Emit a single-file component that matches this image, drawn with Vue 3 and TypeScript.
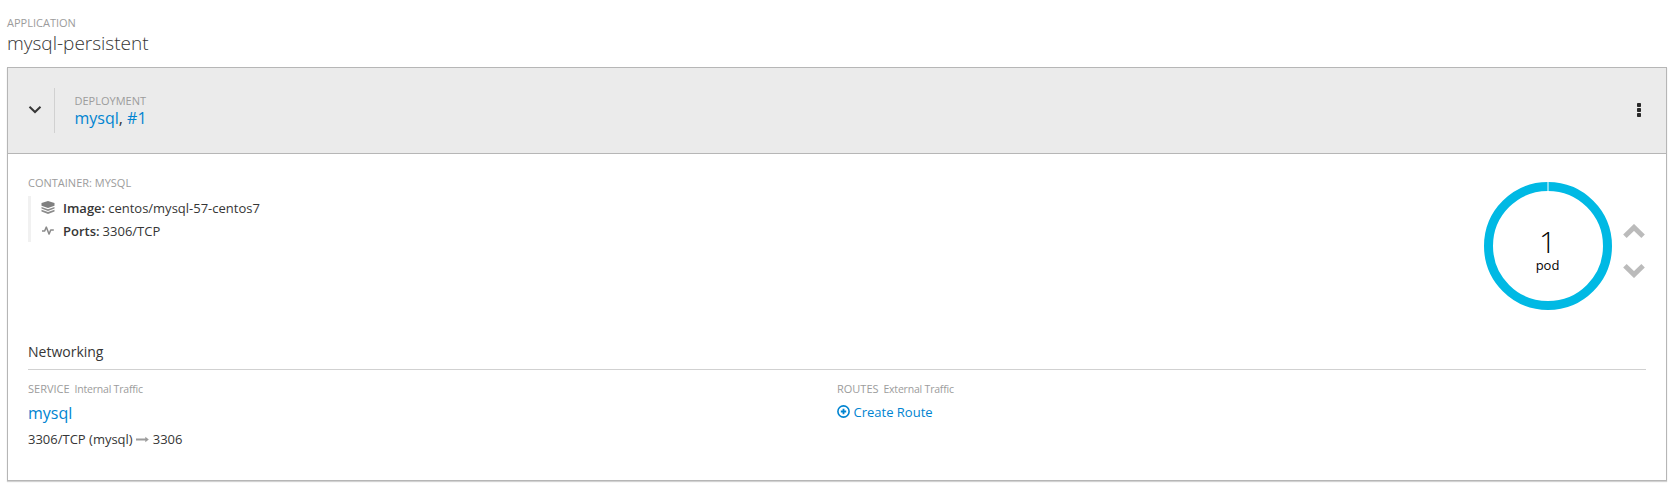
<script setup lang="ts">
interface Detail {
  icon: 'layers' | 'pulse'
  label: string
  value: string
}

const details: Detail[] = [
  { icon: 'layers', label: 'Image:', value: 'centos/mysql-57-centos7' },
  { icon: 'pulse', label: 'Ports:', value: '3306/TCP' },
]
</script>

<template>
  <main class="app">
    <div class="label">APPLICATION</div>
    <h2 class="app-name">mysql-persistent</h2>

    <section class="card">
      <header class="card-header">
        <div class="toggle">
          <svg width="14" height="10" viewBox="0 0 14 10"><path d="M1.5 1.8 7 7 12.5 1.8" fill="none" stroke="#363636" stroke-width="2" /></svg>
        </div>
        <div class="deployment">
          <div class="label">DEPLOYMENT</div>
          <div class="deployment-name"><a>mysql</a>, <a>#1</a></div>
        </div>
        <svg class="kebab" width="4" height="14" viewBox="0 0 4 14" fill="#292929">
          <rect width="4" height="4" rx=".8" /><rect y="5" width="4" height="4" rx=".8" /><rect y="10" width="4" height="4" rx=".8" />
        </svg>
      </header>

      <div class="card-body">
        <div class="overview">
          <div class="container-info">
            <div class="label">CONTAINER: MYSQL</div>
            <ul class="details">
              <li v-for="d in details" :key="d.label">
                <svg v-if="d.icon === 'layers'" width="14" height="14" viewBox="0 0 14 14">
                  <path d="M7 0 13.5 2V4.7L7 7 .5 4.7V2Z" fill="#808080" />
                  <path d="M.5 5.9 7 8.2 13.5 5.9V7.6L7 9.9.5 7.6ZM.5 8.8 7 11.1 13.5 8.8V10.5L7 13 .5 10.5Z" fill="#8b8b8b" />
                </svg>
                <svg v-else width="14" height="14" viewBox="0 0 14 14">
                  <path d="M1 6.9H3.7L5.3 3.1 8 10.1 9.7 6.1H12.8" fill="none" stroke="#8b8b8b" stroke-width="1.5" stroke-linejoin="round" />
                </svg>
                <b>{{ d.label }}</b><span>{{ d.value }}</span>
              </li>
            </ul>
          </div>
          <div class="scaling">
            <div class="donut">
              <svg width="128" height="128" viewBox="0 0 128 128">
                <circle cx="64" cy="64" r="59.5" fill="none" stroke="#00b9e4" stroke-width="9" />
                <path d="M64 0V10" stroke="#fff" stroke-width="1" />
              </svg>
              <div class="pod-text">
                <div class="pod-count">1</div>
                <div class="pod-unit">pod</div>
              </div>
            </div>
            <div class="arrows">
              <svg width="22" height="14" viewBox="0 0 22 14"><path d="M1.9 12.2 11 3.4 20.1 12.2" fill="none" stroke="#bbb" stroke-width="5" /></svg>
              <svg width="22" height="14" viewBox="0 0 22 14"><path d="M1.9 1.8 11 10.6 20.1 1.8" fill="none" stroke="#bbb" stroke-width="5" /></svg>
            </div>
          </div>
        </div>

        <h3 class="networking">Networking</h3>
        <div class="network-grid">
          <div>
            <div class="label">SERVICE <span class="traffic">Internal Traffic</span></div>
            <a class="service-name">mysql</a>
            <div class="port-map">
              <span>3306/TCP (mysql)</span>
              <svg width="13" height="7" viewBox="0 0 13 7"><path d="M0 2.6H9.3V.8L12.8 3.5 9.3 6.2V4.4H0Z" fill="#9c9c9c" /></svg>
              <span>3306</span>
            </div>
          </div>
          <div>
            <div class="label">ROUTES <span class="traffic">External Traffic</span></div>
            <a class="create-route">
              <svg width="13" height="13" viewBox="0 0 13 13" fill="none" stroke="#0084d1">
                <circle cx="6.5" cy="6.5" r="5.6" stroke-width="1.6" />
                <path d="M6.5 3.8V9.2M3.8 6.5H9.2" stroke-width="1.8" />
              </svg>
              <span>Create Route</span>
            </a>
          </div>
        </div>
      </div>
    </section>
  </main>
</template>

<style>
body {
  background: #fff;
}
</style>

<style scoped>
.app {
  box-sizing: border-box;
  height: 490px;
  padding: 15px 10px 0 7px;
  font: 13px/20px "Open Sans", sans-serif;
  color: #363636;
}
svg {
  display: block;
  flex: none;
}
a {
  color: #0084d1;
}
.label {
  font-size: 11px;
  line-height: 16px;
  color: #9c9c9c;
}
.app-name {
  margin: 0;
  padding-bottom: 12px;
  font-size: 19px;
  font-weight: 300;
  line-height: 24px;
}
.card {
  box-sizing: border-box;
  height: 414px;
  border: 1px solid #b6b6b6;
  box-shadow: 0 1px 1px rgba(3, 3, 3, 0.18);
}
.card-header {
  display: flex;
  align-items: center;
  box-sizing: border-box;
  height: 86px;
  padding-right: 25px;
  border-bottom: 1px solid #b6b6b6;
  background: #ebebeb;
}
.toggle {
  display: flex;
  align-items: center;
  box-sizing: border-box;
  width: 47px;
  height: 45px;
  padding: 0 0 1px 20px;
  border-right: 1px solid #d1d1d1;
}
.kebab {
  margin-bottom: 1px;
}
.deployment {
  flex: 1;
  padding-left: 19.5px;
}
.deployment-name {
  font-size: 16px;
  line-height: 19px;
}
.card-body {
  padding: 20px 20px 0;
}
.overview {
  display: flex;
  justify-content: space-between;
  height: 168px;
}
.container-info .label {
  padding-top: 1px;
}
.details {
  margin: 5px 0 0;
  padding: 0 0 0 10px;
  list-style: none;
  border-left: 3px solid #f1f1f1;
}
.details li {
  display: flex;
  align-items: center;
  height: 23px;
}
.details svg {
  margin: 1px 8px 0 0;
}
.details b {
  margin-right: 3px;
  font-weight: 600;
}
.scaling {
  display: flex;
  padding: 8px 1px 0 0;
}
.donut {
  display: grid;
  width: 128px;
  height: 128px;
}
.donut > * {
  grid-area: 1 / 1;
}
.pod-text {
  padding-top: 45px;
  text-align: center;
  color: #030303;
}
.pod-count {
  font-size: 30px;
  font-weight: 300;
  line-height: 30px;
}
.pod-unit {
  line-height: 16px;
}
.arrows {
  display: flex;
  flex-direction: column;
  gap: 26px;
  margin-left: 11.5px;
  padding-top: 42px;
}
.networking {
  margin: 0;
  padding-bottom: 7px;
  border-bottom: 1px solid #d1d1d1;
  font-size: 14px;
  font-weight: 400;
  line-height: 20px;
}
.network-grid {
  display: grid;
  grid-template-columns: 1fr 1fr;
  padding-top: 11px;
}
.traffic {
  margin-left: 2px;
  font-size: 10.5px;
  letter-spacing: -0.2px;
}
.service-name {
  display: block;
  padding-top: 5px;
  font-size: 16px;
  line-height: 22px;
}
.port-map {
  display: flex;
  align-items: center;
  gap: 3.5px;
  padding-top: 5px;
}
.create-route {
  display: flex;
  align-items: center;
  gap: 3.5px;
  padding-top: 5px;
}
.create-route svg {
  margin-bottom: 1px;
}
</style>
